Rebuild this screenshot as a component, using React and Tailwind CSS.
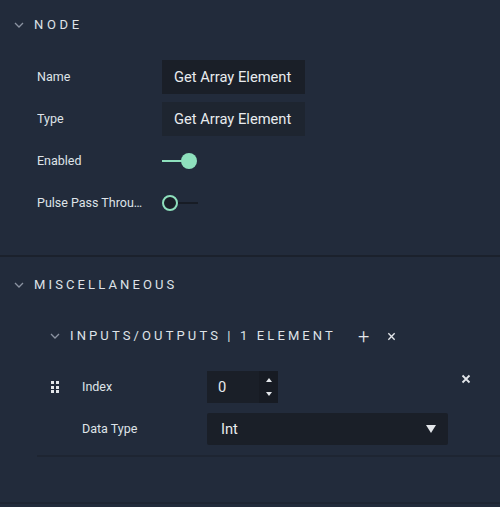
import React from "react";

const Chevron = ({ className = "" }) => (
  <svg width="10" height="6" viewBox="0 0 10 6" className={className}>
    <path d="M1 1l4 4 4-4" fill="none" stroke="#8b93a1" strokeWidth="1.3" />
  </svg>
);

const Cross = ({ size = 10, w = 1.8 }) => (
  <svg width={size} height={size} viewBox="0 0 10 10">
    <path d="M1.5 1.5l7 7M8.5 1.5l-7 7" stroke="#e3e6ea" strokeWidth={w} />
  </svg>
);

const Row = ({ label, children }) => (
  <div className="flex items-center h-[34px]">
    <div className="w-[125px] pr-4 truncate text-[12.5px] text-[#dfe3e8]">{label}</div>
    {children}
  </div>
);

const Toggle = ({ on }) =>
  on ? (
    <div className="relative w-[36px] h-[18px] flex items-center">
      <div className="w-[28px] h-[2px] bg-[#8ee0bd]" />
      <div className="absolute left-[19px] top-[1px] w-[16px] h-[16px] rounded-full bg-[#8ee0bd]" />
    </div>
  ) : (
    <div className="relative w-[36px] h-[18px] flex items-center">
      <div className="ml-[14px] w-[22px] h-[2px] bg-[#171c25]" />
      <div className="absolute left-0 top-[1px] w-[16px] h-[16px] rounded-full border-2 border-[#8ee0bd] bg-[#1a1f28]" />
    </div>
  );

export default function App() {
  return (
    <div className="w-[500px] h-[507px] bg-[#222b3b] overflow-hidden" style={{ fontFamily: "Roboto, 'Noto Sans', sans-serif" }}>
      {/* node section */}
      <div className="h-12 flex items-center pl-[14px] pt-[1px]">
        <Chevron />
        <span className="ml-[10px] text-[13px] tracking-[0.28em] text-[#dfe3e8]">NODE</span>
      </div>
      <div className="pl-[37px] pt-[12px] flex flex-col gap-2">
        <Row label="Name">
          <div className="w-[143px] h-[34px] bg-[#1a1f28] flex items-center px-3 text-[14.7px] text-[#e8ebee]">Get Array Element</div>
        </Row>
        <Row label="Type">
          <div className="w-[143px] h-[34px] bg-[#1e2530] flex items-center px-3 text-[14.7px] text-[#e8ebee]">Get Array Element</div>
        </Row>
        <Row label="Enabled">
          <Toggle on />
        </Row>
        <Row label="Pulse Pass Through">
          <Toggle />
        </Row>
      </div>
      <div className="mt-[35px] h-[2px] bg-[#1b212c]" />

      {/* misc section */}
      <div className="h-[54px] flex items-center pl-[14px] pt-[2px]">
        <Chevron />
        <span className="ml-[10px] text-[13px] tracking-[0.24em] text-[#dfe3e8]">MISCELLANEOUS</span>
      </div>
      <div className="pl-[37px]">
        <div className="h-[50px] flex items-center pl-[13px]">
          <Chevron />
          <span className="ml-[10px] text-[13px] tracking-[0.24em] text-[#dfe3e8]">INPUTS/OUTPUTS | 1 ELEMENT</span>
          <span className="ml-[22px] text-[#e3e6ea] text-[20px] leading-none font-light">+</span>
          <span className="ml-[18px] flex"><Cross size={9} w={1.5} /></span>
        </div>
        <div className="relative pt-[10px] pb-[10px] border-b-2 border-[#1e2532]">
          <div className="flex items-center h-[32px]">
            <div className="w-[45px] pl-[14px]">
              <div className="grid grid-cols-2 gap-x-[2px] gap-y-[1.5px] w-[8px]">
                {Array.from({ length: 6 }).map((_, i) => (
                  <div key={i} className="w-[3px] h-[3px] bg-[#e3e6ea]" />
                ))}
              </div>
            </div>
            <div className="w-[125px] text-[12.5px] text-[#dfe3e8]">Index</div>
            <div className="flex h-[32px] bg-[#1a1f28]">
              <div className="w-[52px] flex items-center pl-[11px] text-[14.7px] text-[#e8ebee]">0</div>
              <div className="w-[19px] bg-[#171b23] flex flex-col items-center justify-center gap-[10px]">
                <svg width="6" height="4" viewBox="0 0 6 4"><path d="M0 4L3 0 6 4z" fill="#e3e6ea" /></svg>
                <svg width="6" height="4" viewBox="0 0 6 4"><path d="M0 0L3 4 6 0z" fill="#e3e6ea" /></svg>
              </div>
            </div>
          </div>
          <div className="absolute right-[29px] top-[13px]"><Cross /></div>
          <div className="flex items-center h-[32px] mt-[10px]">
            <div className="w-[45px]" />
            <div className="w-[125px] text-[12.5px] text-[#dfe3e8]">Data Type</div>
            <div className="w-[241px] h-[32px] rounded-[2px] bg-[#1a1f28] flex items-center justify-between pl-[14px] pr-[12px] text-[14.7px] text-[#e8ebee]">
              <span>Int</span>
              <svg width="10" height="8" viewBox="0 0 10 8"><path d="M0 0h10L5 8z" fill="#e3e6ea" /></svg>
            </div>
          </div>
        </div>
      </div>
      <div className="mt-[45px] h-[2px] bg-[#1e2532]" />
    </div>
  );
}
